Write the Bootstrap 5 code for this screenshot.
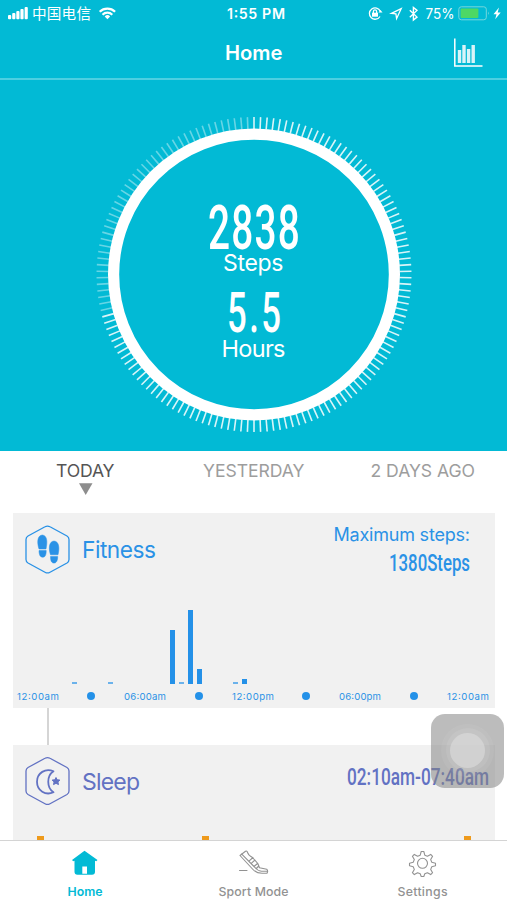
<!DOCTYPE html>
<html lang="en">
<head>
<meta charset="utf-8">
<meta name="viewport" content="width=device-width, initial-scale=1">
<title>Home</title>
<link href="https://cdn.jsdelivr.net/npm/bootstrap@5.3.0/dist/css/bootstrap.min.css" rel="stylesheet">
<style>
:root{--aqua:#02bad5;--blue:#2a92e6;--indigo:#6272c3}
html,body{height:100%}
body{font-family:Inter,"Noto Sans CJK SC",sans-serif;background:#fff;overflow:hidden}
svg{display:block;flex:none;overflow:visible}
svg text{font-family:Inter,sans-serif}
svg .din{font-family:Roboto,sans-serif;font-weight:500}
.screen{width:507px;height:900px}
.top{background:var(--aqua);color:#fff}
.statusbar{height:28px;font-size:14px}
.titlebar{height:52px;border-bottom:2px solid #4dcfe1}
.hero{height:371px;background:var(--aqua)}
.days{height:62px;padding-top:7px;color:#9d9d9d}
.feed{padding:0 12px 0 13px}
.panel{background:#f1f1f1}
.fitness{height:195px;color:var(--blue)}
.sleep{height:95px;color:var(--indigo)}
.panel-head{height:74px;padding:0 20px 0 12px}
.sleep .panel-head{padding-right:1px}
.plot{height:97px;padding-left:21px}
.slot{width:8.96px;flex:none}
.slot i{display:block;width:5px;background:#2491e8;margin:auto}
.slot .faint{opacity:.65}
.axis{display:grid;grid-template-columns:repeat(9,53.75px);margin-left:-2.2px;height:24px}
.pip{width:8px;height:8px;border-radius:50%;background:#2491e8}
.connector{width:1.5px;height:37px;background:#d5d5d5;margin-left:34px}
.sleep-marks{height:4px;padding:0 24px 0 24px;margin-top:17px}
.sleep-marks i{width:7px;height:4px;background:#ee9a1c}
.tabs{height:60px;background:#fff;border-top:1px solid #d4d4d4;color:#929292}
.tabs .active{color:var(--aqua)}
.assist{position:absolute;left:431px;top:714px;width:73px;height:74px;border-radius:14px;background:rgba(132,132,132,.54)}
.assist span{border-radius:50%}
.halo{width:53px;height:53px;margin-bottom:2px;background:rgba(255,255,255,.06)}
.halo2{width:44px;height:44px;background:rgba(255,255,255,.08)}
.core{width:35px;height:35px;background:rgba(216,216,216,.72)}
</style>
<script src="https://cdn.jsdelivr.net/npm/bootstrap@5.3.0/dist/js/bootstrap.bundle.min.js"></script>
</head>
<body>
<div class="screen position-relative d-flex flex-column overflow-hidden">
  <header class="top">
    <svg class="statusbar" width="507" height="28" fill="#fff">
      <g><rect x="8" y="15" width="3.2" height="4.3" rx="1"/><rect x="12.2" y="13" width="3.2" height="6.3" rx="1"/><rect x="16.3" y="11" width="3.2" height="8.3" rx="1"/><rect x="20.4" y="9" width="3.2" height="10.3" rx="1"/><rect x="24.6" y="7" width="3.2" height="12.3" rx="1"/></g>
      <text x="32" y="19" font-size="14.6" textLength="59" style="font-family:'Noto Sans CJK SC',sans-serif;font-weight:400">中国电信</text>
      <g fill="none" stroke="#fff" stroke-width="2.2"><path d="M99.7 11.7a11 11 0 0 1 15.4 0"/><path d="M102.5 14.7a7 7 0 0 1 9.8 0"/></g><path d="M107.4 19.2l-2.7-2.8a3.9 3.9 0 0 1 5.4 0z"/>
      <text x="227" y="19" font-size="14.2" font-weight="600" textLength="58">1:55 PM</text>
      <g fill="none" stroke="#fff" stroke-width="1.3"><path d="M380.3 11.2A5.7 5.7 0 1 0 380 16.5"/><path d="M378.5 12.5h4l-2-2.4" fill="#fff" stroke="none"/><path d="M373.4 13v-1.5a1.6 1.6 0 0 1 3.2 0V13"/><rect x="372" y="12.7" width="6" height="4" fill="#fff" stroke="none"/><path d="M391.4 13.3l9.8-4.6-4.6 9.8-.7-4.7z"/><path d="M409.8 10.3l7.2 6.8-3.6 3V7.4l3.6 3-7.2 6.8" stroke-width="1.4"/></g>
      <text x="425.5" y="18.8" font-size="14.2" textLength="29" lengthAdjust="spacingAndGlyphs">75%</text>
      <rect x="458.8" y="6.8" width="27.5" height="13" rx="2.5" fill="none" stroke="#75d8dc" stroke-width="1"/><rect x="460.6" y="8.6" width="17.8" height="9.4" rx="1" fill="#4dd865"/><path d="M488 11.5q1.7 1.8 0 3.6z" fill="#75d8dc"/><path d="M499 7.5l-5.5 6.7h3l-1.3 5 5.5-6.7h-3z"/>
    </svg>
    <nav class="titlebar">
      <svg width="507" height="50" fill="#fff"><text x="225" y="31.5" font-size="20" font-weight="600" textLength="57.5" lengthAdjust="spacingAndGlyphs">Home</text>
      <path d="M454.8 10.5V38H482.5" fill="none" stroke="#fff" stroke-width="1.5"/><g opacity=".85"><rect x="457.8" y="22" width="3.4" height="13"/><rect x="462.3" y="17" width="3.4" height="18"/><rect x="466.9" y="21" width="3.4" height="14"/><rect x="471.5" y="17" width="3.4" height="18"/></g></svg>
    </nav>
  </header>
  <section class="hero">
    <svg id="dial" viewBox="0 80 507 371" width="507" height="371" fill="#fff">
      <g id="ticks" stroke="#fff" stroke-width="1.6"></g>
      <circle cx="254" cy="274.5" r="140.4" fill="none" stroke="#fff" stroke-width="11.2"/>
      <text class="din" x="0" y="0" font-size="62" letter-spacing="2" transform="translate(208 248.7) scale(.625 1)">2838</text>
      <text x="223" y="271" font-size="23" textLength="60.5">Steps</text>
      <text class="din" x="0" y="0" font-size="56" letter-spacing="4" transform="translate(227 332) scale(.62 1)">5.5</text>
      <text x="221.5" y="356.5" font-size="23.5" textLength="64">Hours</text>
    </svg>
  </section>
  <nav class="days">
    <svg width="507" height="40" viewBox="0 458 507 40" fill="currentColor">
      <text fill="#555" x="56" y="476.6" font-size="17.6" textLength="58.5">TODAY</text>
      <path d="M79 483.3h13.5L85.700 495z" fill="#8d8d8d"/>
      <text x="203" y="476.6" font-size="17.6" textLength="101.5">YESTERDAY</text>
      <text x="370.5" y="476.6" font-size="17.6" textLength="104.5">2 DAYS AGO</text>
    </svg>
  </nav>
  <main class="feed">
    <article class="panel fitness">
      <div class="panel-head d-flex justify-content-between">
        <svg width="135" height="74" viewBox="25 513 135 74" fill="currentColor">
          <path d="M45 526.8q2.5-1.5 5 0L67 536q2 1.2 2 3.5v20q0 2.3-2 3.5l-17 9.2q-2.5 1.5-5 0L28 563q-2-1.2-2-3.5v-20q0-2.3 2-3.5z" fill="none" stroke="currentColor" stroke-width="1.3"/>
          <path d="M39 549c-2-6-2-13.5 3.3-14 5.2.5 5.2 7.5 3.7 14zM39 550.5h7.2c0 4-.7 6.5-3.2 6.7-3.2.2-4-3.2-4-6.7zM50.5 554.8c-2-6-1.8-13.300 3.5-13.8 5.5.5 5.5 7.8 4 13.8zM50.500 556.5h7.2c0 4-1.2 6.6-3.8 6.6-2.6-.1-3.4-2.8-3.4-6.6z" stroke="currentColor" stroke-width=".5"/>
          <text x="82" y="557.5" font-size="22.7" textLength="74">Fitness</text>
        </svg>
        <svg width="145" height="74" viewBox="330 513 145 74" fill="currentColor">
          <text x="333.5" y="541" font-size="18" textLength="136.500">Maximum steps:</text>
          <text class="din" x="389" y="571" font-size="24.5" textLength="81" lengthAdjust="spacingAndGlyphs">1380Steps</text>
        </svg>
      </div>
      <div id="plot" class="plot d-flex align-items-end"></div>
      <div class="axis align-items-center" id="axis"></div>
    </article>
    <div class="connector"></div>
    <article class="panel sleep">
      <div class="panel-head d-flex justify-content-between">
        <svg width="135" height="74" viewBox="25 745 135 74" fill="currentColor">
          <path d="M45 758.3q2.5-1.5 5 0l17 9.2q2 1.2 2 3.5v20q0 2.3-2 3.5l-17 9.2q-2.5 1.5-5 0l-17-9.200q-2-1.2-2-3.5v-20q0-2.3 2-3.5z" fill="none" stroke="currentColor" stroke-width="1.3"/>
          <path d="M53.5 771.3c-8-3.500-16.500 1.500-16.500 10.500s8.500 14 16.500 10.500c-7-4.500-7-16.500 0-21z" fill="none" stroke="currentColor" stroke-width="1.8" stroke-linejoin="round"/>
          <path d="M56 777.5l1.2 2.3 2.7.3-2 1.8.6 2.7-2.5-1.3-2.5 1.3.6-2.7-2-1.8 2.7-.3z" stroke="currentColor" stroke-linejoin="round"/>
          <text x="82" y="790" font-size="23" textLength="58">Sleep</text>
        </svg>
        <svg width="150" height="74" viewBox="344 745 150 74" fill="currentColor"><text class="din" x="347" y="785.3" font-size="24.500" textLength="142" lengthAdjust="spacingAndGlyphs">02:10am-07:40am</text></svg>
      </div>
      <div class="sleep-marks d-flex justify-content-between"><i></i><i class="mid"></i><i></i></div>
    </article>
  </main>
  <style>.sleep-marks .mid{margin-right:98px}</style>
  <nav class="tabs position-absolute bottom-0 start-0 w-100">
    <svg width="507" height="59" viewBox="0 841 507 59" fill="currentColor">
      <g class="active"><path d="M84.5 850.8l13 9.200-1.200 1.300-1.300-.6v11q0 3-3 3H77.500q-3 0-3-3v-11l-1.300.6L72 860zM82.300 873.700h4.700v-7.200h-4.700z" fill-rule="evenodd"/><text x="67.5" y="895.5" font-size="12.3" font-weight="600" textLength="35">Home</text></g>
      <g fill="none" stroke="currentColor" stroke-width="1.1" stroke-linejoin="round" stroke-linecap="round"><path d="M240 855.5l5.500-4.200q1.500-.8 2 1 .8 3 5 5.200l5.300 6 1.700 4.200 7.200 1.500q1.700 1.700.3 4h-5q-6 0-9.500-4.200zM241.500 853.800l13 13.200q3 3.800 7 4.200h6M253 857.500l-3.500 3.200M255 860l-3.500 3.200M257.500 863.500l-3.500 3M258.800 866l-2.500 2.500M239.500 870.500h7.500"/>
      <path d="M420.2 855.2l1-3.700h2.600l1 3.700 2.600 1.100 3.300-1.900 1.900 1.900-1.900 3.300 1.100 2.600 3.700 1v2.600l-3.700 1-1.100 2.600 1.900 3.300-1.900 1.900-3.300-1.900-2.600 1.100-1 2.700h-2.600l-1-2.700-2.600-1.100-3.300 1.900-1.900-1.900 1.900-3.300-1.100-2.600-3.700-1v-2.600l3.700-1 1.100-2.600-1.900-3.300 1.900-1.900 3.300 1.900z"/><circle cx="422.5" cy="863.3" r="5"/></g>
      <text x="218.5" y="895.5" font-size="12.3" font-weight="500" textLength="70">Sport Mode</text>
      <text x="397.5" y="895.5" font-size="12.3" font-weight="500" textLength="50">Settings</text>
    </svg>
  </nav>
  <div class="assist d-flex align-items-center justify-content-center"><span class="halo d-flex align-items-center justify-content-center"><span class="halo2 d-flex align-items-center justify-content-center"><span class="core"></span></span></span></div>
</div>
<script>
// dial: 150 ticks, the ones past today's progress are dimmed
const TICKS = 150, DONE = 107;
document.getElementById('ticks').innerHTML = Array.from({length: TICKS}, (_, i) =>
  `<line x1="254" y1="117" x2="254" y2="129" transform="rotate(${i * 360 / TICKS} 254 274.5)" opacity="${i < DONE ? .85 : .4}"/>`).join('');
// half-hour step counts, as bar heights
const bars = {4: 2, 8: 2, 15: 54, 16: 2, 17: 74, 18: 15, 22: 2, 23: 5};
document.getElementById('plot').innerHTML = Array.from({length: 49}, (_, i) =>
  `<div class="slot">${bars[i] ? `<i class="${bars[i] < 3 ? 'faint' : ''}" style="height:${bars[i]}px"></i>` : ''}</div>`).join('');
document.getElementById('axis').innerHTML = ['12:00am', '', '06:00am', '', '12:00pm', '', '06:00pm', '', '12:00am'].map(t =>
  t ? `<svg width="46" height="14" class="mx-auto" fill="currentColor"><text x="2" y="10.6" font-size="9.6" textLength="42">${t}</text></svg>` : '<span class="pip mx-auto"></span>').join('');
</script>
</body>
</html>
